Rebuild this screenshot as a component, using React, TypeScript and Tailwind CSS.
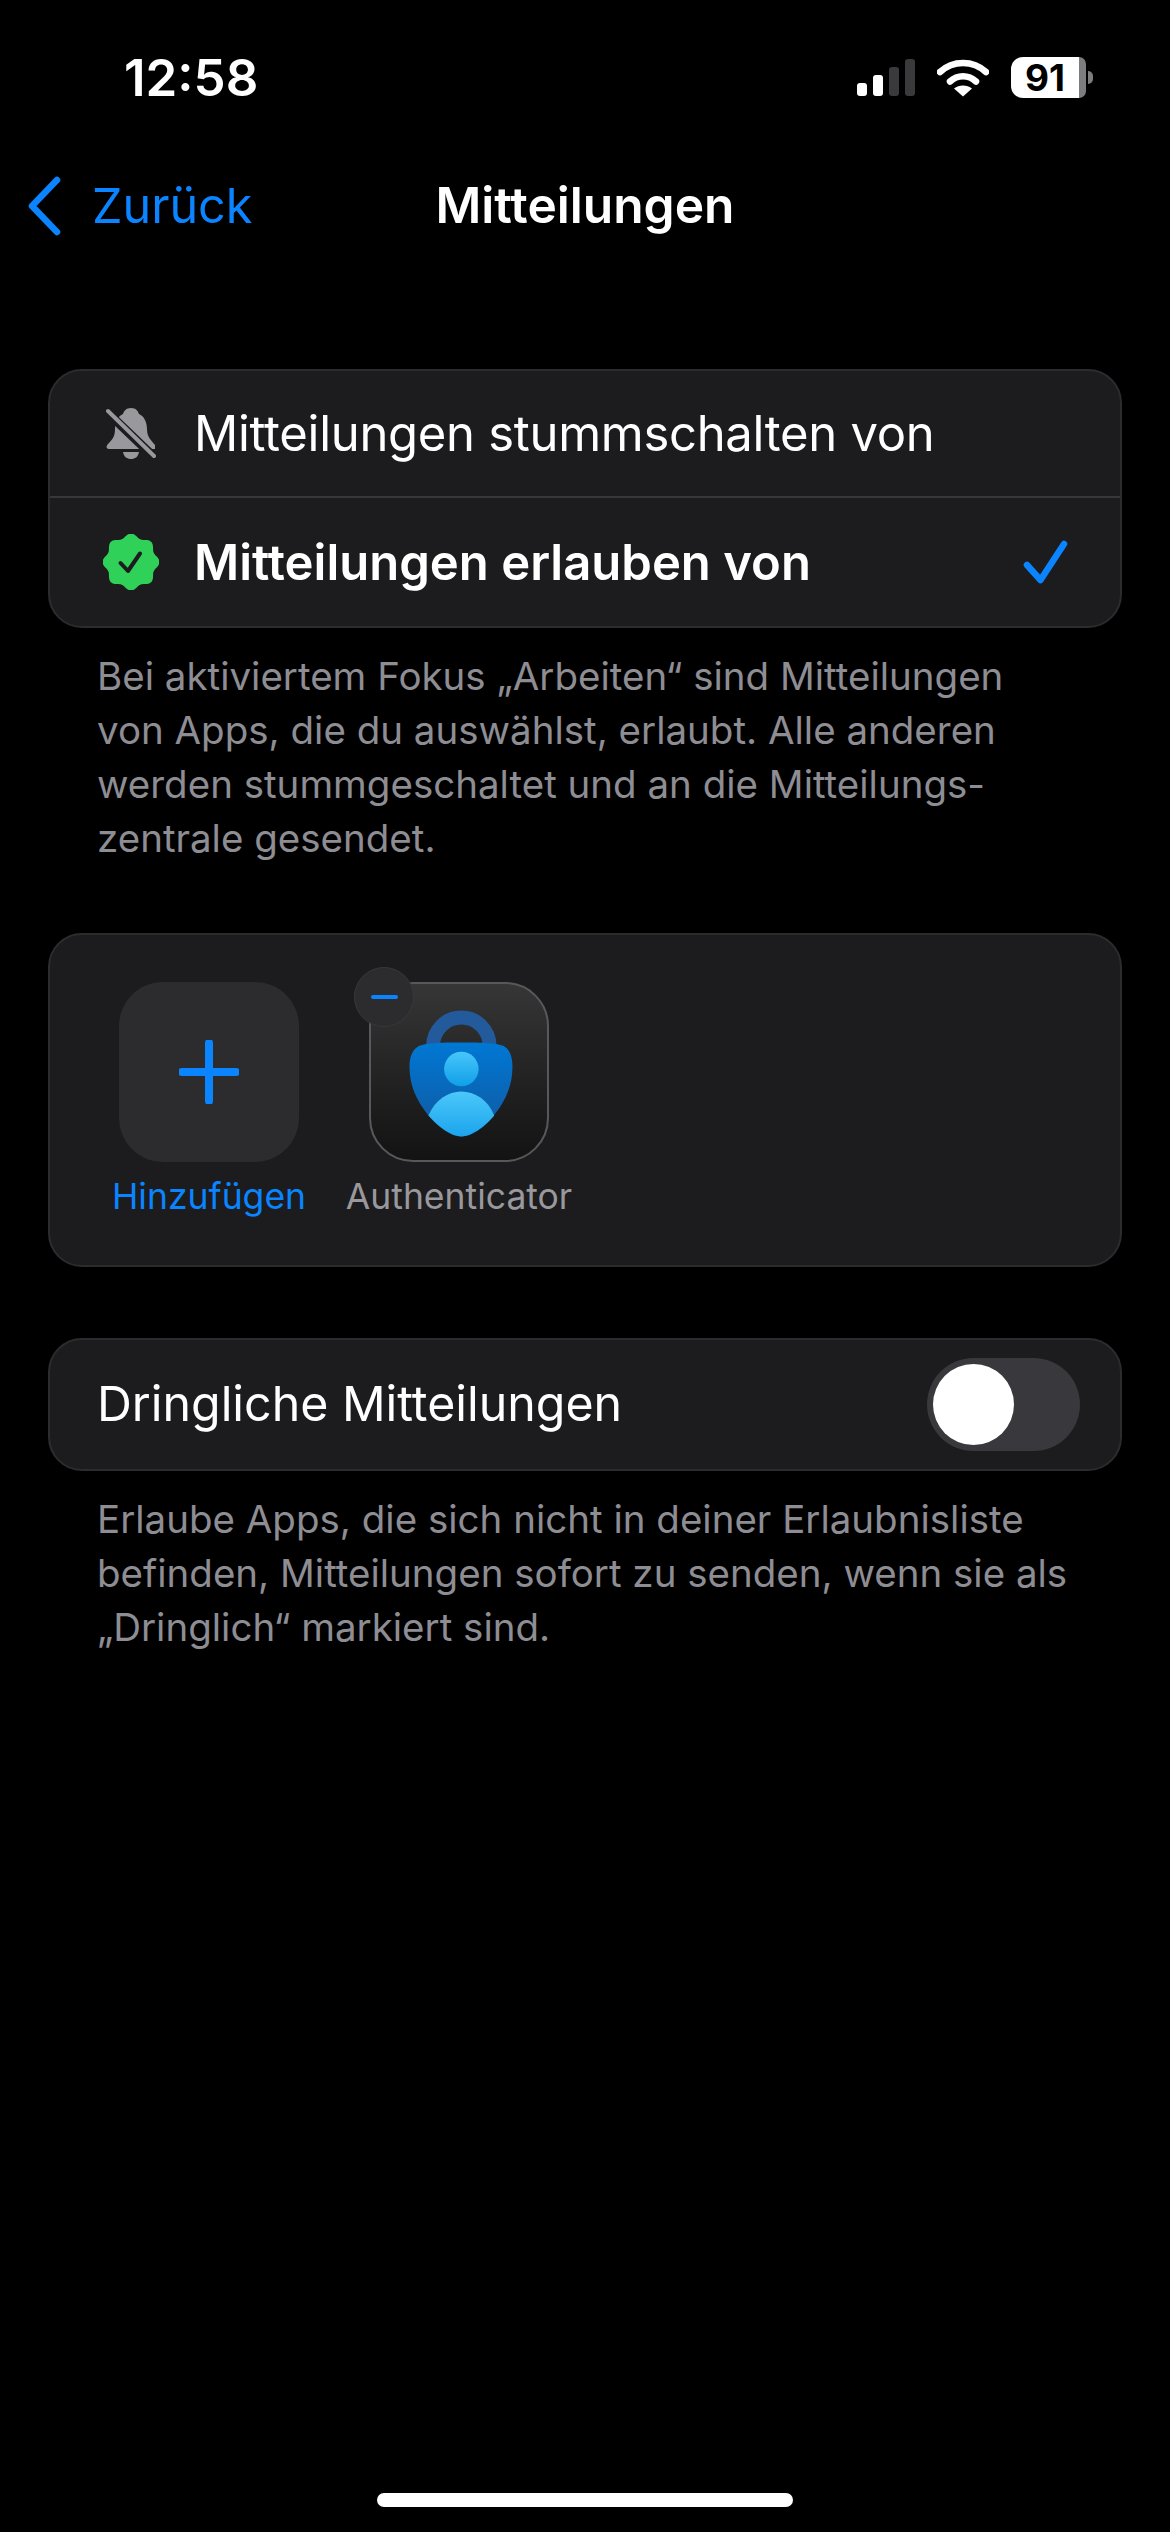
import React from 'react';

const sealPoints = Array.from({ length: 160 }, (_, i) => {
  const a = (i / 160) * Math.PI * 2;
  const r = 26.5 + 2 * Math.cos(8 * a);
  return `${(28 + r * Math.sin(a)).toFixed(2)},${(28 - r * Math.cos(a)).toFixed(2)}`;
}).join(' ');

const StatusBar = () => (
  <div className="flex h-[159px] items-start justify-between pl-[124px] pr-[77px] pt-[49px]">
    <span className="text-[51px] leading-[58px] font-semibold text-white">12:58</span>
    <div className="flex items-start pt-[8px]">
      <div className="flex h-[41px] items-end gap-[6px] pb-[2px]">
        <div className="h-[13px] w-[10px] rounded-[3px] bg-white" />
        <div className="h-[21px] w-[10px] rounded-[3px] bg-white" />
        <div className="h-[29px] w-[10px] rounded-[3px] bg-[#3a3a3c]" />
        <div className="h-[37px] w-[10px] rounded-[3px] bg-[#3a3a3c]" />
      </div>
      <svg width="52" height="38" viewBox="0 0 52 38" className="ml-[22px] mt-[2px]" fill="none">
        <path d="M3 13 C16 1 36 1 49 13" stroke="#fff" strokeWidth="6.5" strokeLinecap="round" />
        <path d="M13 22.5 C20.5 15.5 31.5 15.5 39 22.5" stroke="#fff" strokeWidth="6.5" strokeLinecap="round" />
        <path d="M26 37.5 L17 29.5 C22 25.5 30 25.5 35 29.5 Z" fill="#fff" />
      </svg>
      <div className="ml-[22px] flex items-center">
        <div className="flex h-[41px] w-[68px] items-center justify-center rounded-l-[12px] bg-white text-[37px] leading-none font-bold text-black">
          91
        </div>
        <div className="h-[41px] w-[7px] rounded-r-[12px] bg-[#7d7d7f]" />
        <div className="ml-[2px] h-[13px] w-[5px] rounded-r-full bg-[#7d7d7f]" />
      </div>
    </div>
  </div>
);

const NavBar = () => (
  <div className="grid h-[94px] grid-cols-[1fr_auto_1fr] items-center">
    <div className="flex items-center pl-[26px] text-[#0a84ff]">
      <svg width="36" height="60" viewBox="0 0 36 60" fill="none">
        <path d="M31 4 L6 30 L31 56" stroke="#0a84ff" strokeWidth="6.5" strokeLinecap="round" strokeLinejoin="round" />
      </svg>
      <span className="ml-[30px] text-[48.5px] leading-none">Zurück</span>
    </div>
    <span className="text-[49.7px] leading-none font-semibold text-white">Mitteilungen</span>
    <div />
  </div>
);

const BellSlash = () => (
  <svg width="50" height="54" viewBox="0 0 50 54" fill="none">
    <path d="M25 1 C30 1 32 4 33 7 C38 9 41 15 41 22 C41 30 45 33 49 38 L49 42 H3 C0 42 0 39 2 37 C6 33 9 30 9 22 C9 15 12 9 17 7 C18 4 20 1 25 1 Z" fill="#98989d" />
    <path d="M17 45 H33 C32 50 29 52 25 52 C21 52 18 50 17 45 Z" fill="#98989d" />
    <path d="M0 4 L48 50" stroke="#1c1c1e" strokeWidth="9" />
    <path d="M2 4 L48 49" stroke="#98989d" strokeWidth="4" strokeLinecap="round" />
  </svg>
);

const SealCheck = () => (
  <svg width="56" height="56" viewBox="0 0 56 56" fill="none">
    <polygon points={sealPoints} fill="#30d158" />
    <path d="M17.5 29 L25 37 L37 19.5" stroke="#1c1c1e" strokeWidth="4" strokeLinecap="round" strokeLinejoin="round" />
  </svg>
);

const AuthenticatorLogo = () => (
  <svg width="178" height="178" viewBox="92 96 536 536" fill="none">
    <defs>
      <linearGradient id="shieldFill" x1="0" y1="0" x2="0" y2="1">
        <stop offset="0" stopColor="#0078d4" />
        <stop offset="1" stopColor="#11589f" />
      </linearGradient>
      <linearGradient id="headFill" x1="0" y1="0" x2="0" y2="1">
        <stop offset="0" stopColor="#48c6fb" />
        <stop offset="1" stopColor="#0f9fe8" />
      </linearGradient>
      <linearGradient id="bodyFill" x1="0" y1="0" x2="0" y2="1">
        <stop offset="0" stopColor="#4bc8fb" />
        <stop offset="1" stopColor="#1ca4ec" />
      </linearGradient>
    </defs>
    <path d="M279 290 V282 A85 85 0 0 1 449 282 V290" stroke="#235a9c" strokeWidth="42" />
    <path d="M364 272 C420 272 480 273 495 285 C512 296 518 320 518 345 C518 420 480 480 430 525 C405 545 385 555 364 555 C343 555 323 545 298 525 C248 480 208 420 208 345 C208 320 214 296 233 285 C248 273 308 272 364 272 Z" fill="url(#shieldFill)" />
    <circle cx="364" cy="352" r="52" fill="url(#headFill)" />
    <path d="M265 492 C285 445 325 420 364 420 C403 420 445 445 463 492 C445 515 400 555 364 555 C328 555 285 515 265 492 Z" fill="url(#bodyFill)" />
  </svg>
);

const FootNote = ({ lines }: { lines: string[] }) => (
  <div className="px-[97px] pt-[21px] text-[38.5px] leading-[54px] text-[#8d8d93]">
    {lines.map(line => (
      <div key={line} className="whitespace-nowrap">{line}</div>
    ))}
  </div>
);

export default function App() {
  return (
    <div className="flex h-[2532px] w-[1170px] flex-col overflow-hidden bg-black font-['Inter',sans-serif]">
      <StatusBar />
      <NavBar />

      <div className="mx-[48px] mt-[116px] rounded-[34px] border-2 border-[#2c2c2e] bg-[#1c1c1e] text-white">
        <div className="flex h-[127px] items-center border-b-2 border-[#38383a]">
          <div className="flex w-[144px] justify-center pl-[18px]"><BellSlash /></div>
          <span className="text-[49px] leading-none tracking-[-0.3px]">Mitteilungen stummschalten von</span>
        </div>
        <div className="flex h-[128px] items-center pr-[50px]">
          <div className="flex w-[144px] justify-center pl-[18px]"><SealCheck /></div>
          <span className="flex-1 text-[49px] leading-none font-semibold">Mitteilungen erlauben von</span>
          <svg width="48" height="48" viewBox="0 0 48 48" fill="none">
            <path d="M5 27 L18.5 42 L42 6" stroke="#0a84ff" strokeWidth="6.5" strokeLinecap="round" strokeLinejoin="round" />
          </svg>
        </div>
      </div>
      <FootNote
        lines={[
          'Bei aktiviertem Fokus „Arbeiten“ sind Mitteilungen',
          'von Apps, die du auswählst, erlaubt. Alle anderen',
          'werden stummgeschaltet und an die Mitteilungs-',
          'zentrale gesendet.',
        ]}
      />

      <div className="mx-[48px] mt-[68px] flex h-[334px] gap-[70px] rounded-[34px] border-2 border-[#2c2c2e] bg-[#1c1c1e] pl-[69px] pt-[47px]">
        <div className="flex w-[180px] flex-col items-center">
          <div className="flex h-[180px] w-[180px] items-center justify-center rounded-[44px] bg-[#2c2c2e]">
            <svg width="60" height="64" viewBox="0 0 60 64" fill="none">
              <path d="M30 3 V61 M3 32 H57" stroke="#0a84ff" strokeWidth="8" strokeLinecap="round" />
            </svg>
          </div>
          <span className="mt-[14px] whitespace-nowrap text-[35.5px] leading-[42px] text-[#0a84ff]">Hinzufügen</span>
        </div>
        <div className="flex w-[180px] flex-col items-center">
          <div className="relative h-[180px] w-[180px] rounded-[44px] border-2 border-[#58585a] bg-linear-to-b from-[#363636] to-[#131313]">
            <AuthenticatorLogo />
            <div className="absolute left-[-17px] top-[-17px] flex h-[60px] w-[60px] items-center justify-center rounded-full border border-[#38383a] bg-[#2c2c2e]">
              <div className="h-[4px] w-[27px] rounded-full bg-[#0a84ff]" />
            </div>
          </div>
          <span className="mt-[14px] whitespace-nowrap text-[35.5px] leading-[42px] text-[#98989d]">Authenticator</span>
        </div>
      </div>

      <div className="mx-[48px] mt-[71px] flex h-[133px] items-center justify-between rounded-[34px] border-2 border-[#2c2c2e] bg-[#1c1c1e] pl-[47px] pr-[40px]">
        <span className="text-[48.3px] leading-none text-white">Dringliche Mitteilungen</span>
        <div className="flex h-[93px] w-[153px] items-center rounded-full bg-[#39393d] pl-[6px]">
          <div className="h-[81px] w-[81px] rounded-full bg-white" />
        </div>
      </div>
      <FootNote
        lines={[
          'Erlaube Apps, die sich nicht in deiner Erlaubnisliste',
          'befinden, Mitteilungen sofort zu senden, wenn sie als',
          '„Dringlich“ markiert sind.',
        ]}
      />

      <div className="mt-auto mb-[25px] flex justify-center">
        <div className="h-[14px] w-[416px] rounded-full bg-white" />
      </div>
    </div>
  );
}
